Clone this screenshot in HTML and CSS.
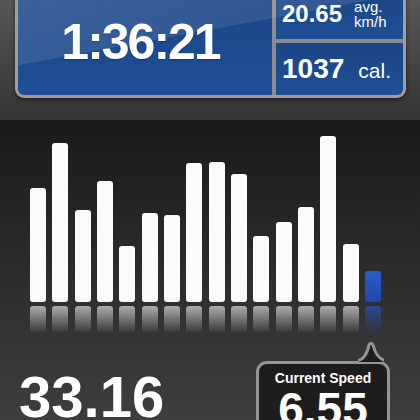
FILE: index.html
```html
<!DOCTYPE html>
<html lang="en">
<head>
    <meta charset="UTF-8">
    <meta name="viewport" content="width=device-width, initial-scale=1.0">
    <title>Ride Stats</title>
    <link rel="stylesheet" href="styles.css">
</head>
<body>
    <div class="top">
        <div class="panel">
            <div class="cell time">1:36:21</div>
            <div class="side">
                <div class="cell stat avg">
                    <span class="num">20.65</span>
                    <span class="unit">avg.<br>km/h</span>
                </div>
                <div class="cell stat cal">
                    <div><span class="num">1037</span><span class="unit">cal.</span></div>
                </div>
            </div>
        </div>
    </div>
    <div class="lower">
        <div class="bars">
            <div class="col"><div class="bar" style="height:114px"></div><div class="refl"></div></div>
            <div class="col"><div class="bar" style="height:159px"></div><div class="refl"></div></div>
            <div class="col"><div class="bar" style="height:92px"></div><div class="refl"></div></div>
            <div class="col"><div class="bar" style="height:121px"></div><div class="refl"></div></div>
            <div class="col"><div class="bar" style="height:56px"></div><div class="refl"></div></div>
            <div class="col"><div class="bar" style="height:89px"></div><div class="refl"></div></div>
            <div class="col"><div class="bar" style="height:87px"></div><div class="refl"></div></div>
            <div class="col"><div class="bar" style="height:139px"></div><div class="refl"></div></div>
            <div class="col"><div class="bar" style="height:140px"></div><div class="refl"></div></div>
            <div class="col"><div class="bar" style="height:128px"></div><div class="refl"></div></div>
            <div class="col"><div class="bar" style="height:66px"></div><div class="refl"></div></div>
            <div class="col"><div class="bar" style="height:80px"></div><div class="refl"></div></div>
            <div class="col"><div class="bar" style="height:95px"></div><div class="refl"></div></div>
            <div class="col"><div class="bar" style="height:166px"></div><div class="refl"></div></div>
            <div class="col"><div class="bar" style="height:58px"></div><div class="refl"></div></div>
            <div class="col current"><div class="bar" style="height:31px"></div><div class="refl"></div></div>
        </div>
        <div class="footer">
            <div class="distance">33.16</div>
            <div class="bubble">
                <svg class="tail" width="26" height="21" viewBox="0 0 26 21">
                    <path d="M1 19.5 Q8 18 11 4 Q13 0.5 15 4 Q18 16 25 19.5 L25 21 L1 21 Z" fill="#1d1d1d"/>
                    <path d="M0 19.5 Q8 18 11 4 Q13 0.5 15 4 Q18 16 26 19.5" fill="none" stroke="#959595" stroke-width="3"/>
                </svg>
                <div class="label">Current Speed</div>
                <div class="speed">6.55</div>
            </div>
        </div>
    </div>
</body>
</html>
```

FILE: styles.css
```css
body {
    margin: 0;
    width: 420px;
    height: 420px;
    overflow: hidden;
    font-family: "Liberation Sans", Arial, sans-serif;
    color: #fff;
    background: #2a2a2a;
}

/* header with the blue panel */
.top {
    display: flow-root;
    height: 120px;
    padding: 0 14px 0 15px;
    background: linear-gradient(#575757, #343434);
}
.panel {
    position: relative;
    display: flex;
    gap: 4px;
    height: 107px;
    margin-top: -15px;
    border: 3px solid #9e9e9e;
    border-radius: 0 0 9px 9px;
    background: #8c8c8c;
    box-shadow: 0 2px 4px rgba(0, 0, 0, 0.45);
    overflow: hidden;
}
.panel::after {
    content: "";
    position: absolute;
    inset: 0;
    background: linear-gradient(169.5deg, rgba(255, 255, 255, 0.15) 0%, rgba(255, 255, 255, 0.09) 43.3%, rgba(255, 255, 255, 0) 43.3%);
    pointer-events: none;
}
.cell {
    background: linear-gradient(#1c4584, #1f4f96);
    display: flex;
    align-items: center;
}
.time {
    width: 254px;
    justify-content: center;
    padding-right: 9px;
    box-sizing: border-box;
    font-size: 50px;
    font-weight: bold;
    letter-spacing: -2px;
    text-shadow: 0 1px 1px rgba(0, 0, 0, 0.3);
}
.side {
    width: 127px;
    display: flex;
    flex-direction: column;
    gap: 4px;
}
.stat {
    padding-left: 6px;
    gap: 12px;
}
.avg {
    height: 51px;
}
.cal {
    height: 52px;
}
.stat .num {
    font-size: 24px;
    font-weight: bold;
}
.stat .unit {
    font-size: 15px;
    line-height: 15px;
}
.cal .num {
    font-size: 28px;
    margin-right: 14px;
}
.cal .unit {
    font-size: 21px;
}

/* chart */
.lower {
    height: 300px;
    overflow: hidden;
    background: linear-gradient(#1a1a1a, #3e3e3e);
}
.bars {
    display: flex;
    align-items: flex-end;
    gap: 6.33px;
    height: 212px;
    padding-left: 30px;
}
.col {
    width: 16px;
    display: flex;
    flex-direction: column;
}
.bar {
    background: #fbfbfb;
    border-radius: 3px;
}
.refl {
    height: 26px;
    margin-top: 4px;
    border-radius: 3px 3px 0 0;
    background: linear-gradient(rgba(255, 255, 255, 0.6), rgba(255, 255, 255, 0.04));
}
.current .bar {
    background: linear-gradient(#2a5cc9, #1f49aa);
}
.current .refl {
    background: linear-gradient(rgba(40, 80, 180, 0.75), rgba(40, 80, 180, 0.05));
}

/* bottom numbers */
.footer {
    display: flex;
    justify-content: space-between;
    align-items: flex-start;
    padding: 0 30px 0 19px;
}
.distance {
    margin-top: 36px;
    font-size: 58px;
    line-height: 58px;
    font-weight: bold;
}
.bubble {
    position: relative;
    width: 128px;
    margin-top: 29px;
    padding-top: 6px;
    height: 70px;
    border: 3px solid #959595;
    border-radius: 11px;
    background: #1d1d1d;
    text-align: center;
}
.tail {
    position: absolute;
    left: 99px;
    top: -23px;
}
.label {
    font-size: 14px;
    line-height: 16px;
    font-weight: bold;
}
.speed {
    font-size: 46px;
    line-height: 46px;
    font-weight: bold;
}
```
